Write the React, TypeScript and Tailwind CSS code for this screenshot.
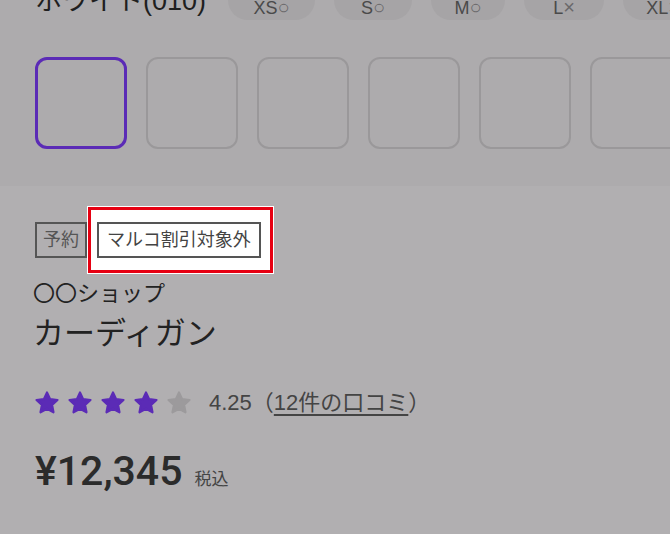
const sizes = [
  { label: "XS", mark: "○", w: "w-[87px]" },
  { label: "S", mark: "○", w: "w-[78px]" },
  { label: "M", mark: "○", w: "w-[74px]" },
  { label: "L", mark: "×", w: "w-[80px]" },
  { label: "XL", mark: "×", w: "w-[80px]" },
];

const Star = ({ filled }: { filled: boolean }) => (
  <svg width="26" height="26" viewBox="0 0 24 24" className="shrink-0">
    <path
      d="M12 2.2l2.9 6.2 6.8.8-5 4.7 1.3 6.7L12 17.3l-6 3.3 1.3-6.7-5-4.7 6.8-.8z"
      fill={filled ? "#5b2bb6" : "#9c9a9c"}
      stroke={filled ? "#5b2bb6" : "#9c9a9c"}
      strokeLinejoin="round"
      strokeWidth="2"
    />
  </svg>
);

const App = () => {
  return (
    <div
      className="w-[670px] h-[534px] overflow-hidden bg-[#b1afb1] text-[#222]"
      style={{ fontFamily: '"Liberation Sans", "Noto Sans CJK JP", sans-serif' }}
    >
      {/* color / size selector, dimmed */}
      <section className="bg-[#adabad] h-[186px]">
        <div className="flex items-end h-[20px] pl-[35px] overflow-hidden">
          <h2 className="text-[27px] leading-none mb-[5px] w-[193px] shrink-0 whitespace-nowrap text-[#1f1f1f]">
            ホワイト(010)
          </h2>
          <div className="flex gap-[19px] shrink-0">
            {sizes.map((s) => (
              <div
                key={s.label}
                className={`${s.w} h-[40px] rounded-full bg-[#a6a4a6] flex items-end justify-center pb-[3px] text-[18px] leading-none text-[#4a4a4a] shrink-0`}
              >
                {s.label}
                <span className="text-[20px] leading-none text-[#6a686a]">{s.mark}</span>
              </div>
            ))}
          </div>
        </div>
        <div className="flex gap-[19px] pl-[35px] mt-[37px]">
          <div className="w-[92px] h-[92px] shrink-0 rounded-[12px] border-[3px] border-[#5b2bb6]" />
          {[1, 2, 3, 4, 5].map((i) => (
            <div
              key={i}
              className="w-[92px] h-[92px] shrink-0 rounded-[12px] border-2 border-[#9a989a]"
            />
          ))}
        </div>
      </section>

      {/* product info */}
      <section className="pl-[35px] pt-[21px]">
        <div className="flex items-center">
          <span className="h-[36px] px-[6px] flex items-center border-2 border-[#555] text-[18px] text-[#555]">
            予約
          </span>
          <div className="bg-white border-[3px] border-[#e60012] ml-[1px] pl-[6px] pr-[9px] py-[12px] outline outline-1 outline-white">
            <span className="h-[36px] px-[8px] flex items-center border-2 border-[#555] text-[18px] text-[#444] whitespace-nowrap">
              マルコ割引対象外
            </span>
          </div>
        </div>
        <p className="text-[22px] leading-none mt-[10px] -ml-[2px]">〇〇ショップ</p>
        <h1 className="text-[31px] leading-none mt-[13px] -ml-[2px]">カーディガン</h1>
        <div className="flex items-center mt-[37px] -ml-[1px]">
          <div className="flex gap-[7px]">
            <Star filled />
            <Star filled />
            <Star filled />
            <Star filled />
            <Star filled={false} />
          </div>
          <span className="ml-[17px] text-[22px] text-[#444]">
            4.25（<span className="underline underline-offset-[4px]">12件の口コミ</span>）
          </span>
        </div>
        <div className="flex items-baseline mt-[22px]">
          <span
            className="text-[41px] font-medium text-[#2b2b2b]"
            style={{ fontFamily: "Roboto, sans-serif" }}
          >
            ¥12,345
          </span>
          <span className="ml-[12px] text-[17px] text-[#444]">税込</span>
        </div>
      </section>
    </div>
  );
};

export default App;
